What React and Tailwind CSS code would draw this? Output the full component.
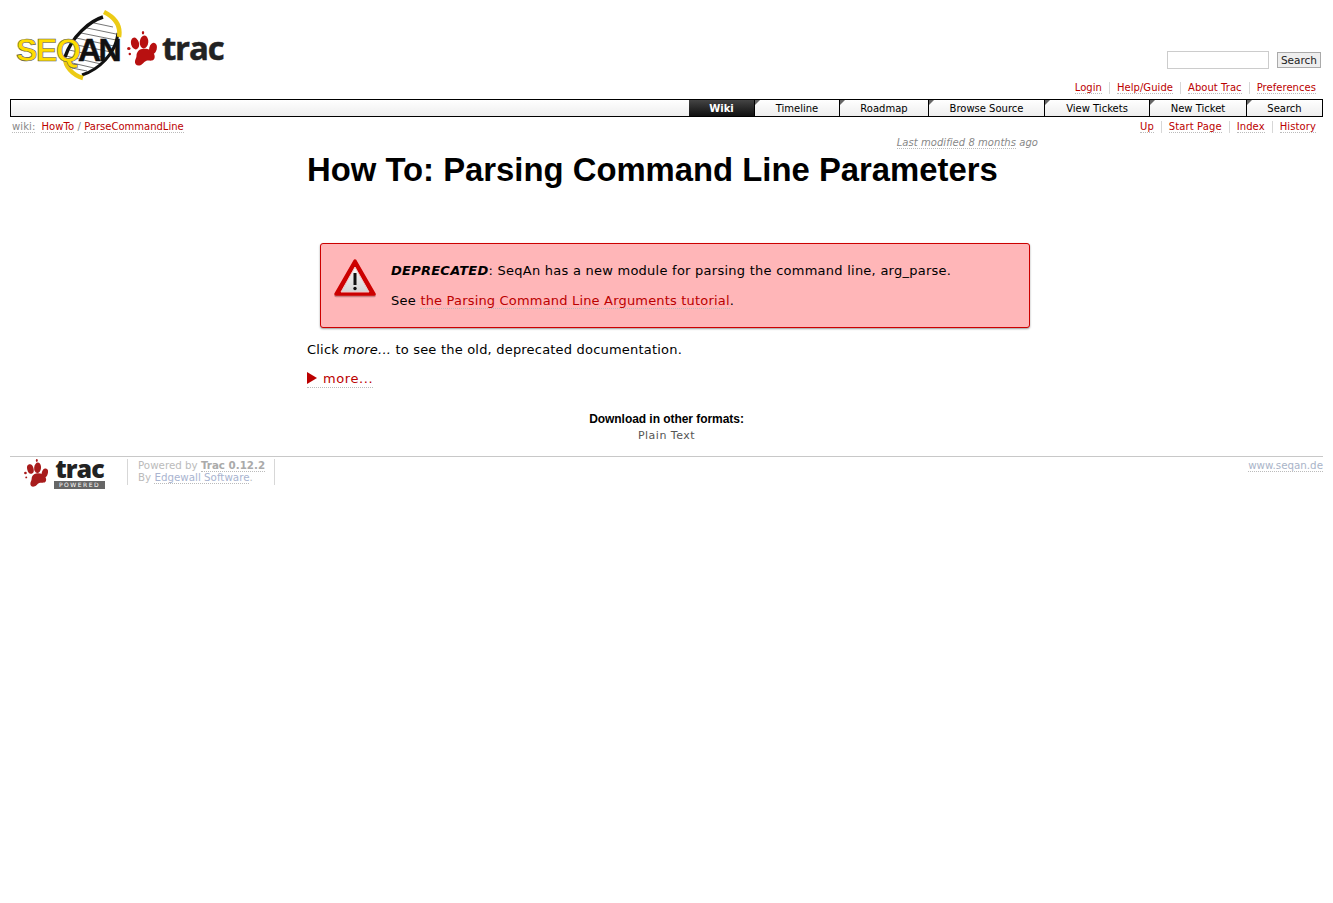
import React from "react";

const verdana = "font-['DejaVu_Sans',Verdana,sans-serif]";
const link = "text-[#b00] border-b border-dotted border-[#bbb]";

// paw drawn in a 30x35 box
const PawShapes = ({ color }) => (
  <g fill={color}>
    <path d="M15 18c5-1 10 1 12 5 1.500 3 .5 6-2 6.500-2.500.5-4-.5-6 .5-2.500 1-3.500 4-6.500 4.500-3 .5-5-1.500-4.500-4.500.3-2 1.500-3 1.500-5 0-3.500 2-6.500 5.500-7z" />
    <ellipse cx="8" cy="12.500" rx="4" ry="6" transform="rotate(-15 8 12.500)" />
    <ellipse cx="17" cy="11" rx="4.300" ry="6.500" transform="rotate(5 17 11)" />
    <ellipse cx="26" cy="17.500" rx="3.800" ry="5.800" transform="rotate(15 26 17.500)" />
    <ellipse cx="1.800" cy="17.500" rx="1.700" ry="1.500" />
    <ellipse cx="16" cy="1.800" rx="1.200" ry="1.800" />
    <ellipse cx="2.800" cy="23" rx="1.200" ry="1.200" />
  </g>
);

const Logo = () => (
  <svg viewBox="0 0 215 72" className="w-[215px] h-[72px] block">
    {/* helix */}
    <path d="M87 7 C74 11 56 26 49 47 C52 56 58 62 66 65 C82 60 98 44 102 23 C100 15 95 9 87 7 Z" fill="#fff" />
    <g stroke="#666" strokeWidth="0.900">
      <path d="M78 13 L97 17" />
      <path d="M71 18 L100 24" />
      <path d="M65 23 L100 30" />
      <path d="M60 28 L98 36" />
      <path d="M56 34 L95 42" />
      <path d="M53 40 L90 48" />
      <path d="M50 46 L85 54" />
      <path d="M52 52 L78 58" />
      <path d="M56 58 L71 61" />
    </g>
    <path d="M87 7 C74 11 56 26 49 47" fill="none" stroke="#111" strokeWidth="3.500" />
    <path d="M102 23 C100 44 82 60 66 65" fill="none" stroke="#111" strokeWidth="3" />
    <path d="M88 2 C100 8 105 16 103 27" fill="none" stroke="#eccb15" strokeWidth="4.500" />
    <path d="M49 48 C49 56 56 65 67 68" fill="none" stroke="#eccb15" strokeWidth="4.500" />
    <text x="0" y="51" fontFamily="'Liberation Sans',sans-serif" fontWeight="700" fontSize="32" letterSpacing="-1.300" fill="#ffdd00" stroke="#555" strokeWidth="0.600">SEQ</text>
    <text x="62" y="51" fontFamily="'Liberation Sans',sans-serif" fontWeight="700" fontSize="32" letterSpacing="-2.500" fill="#111" stroke="#111" strokeWidth="0.500">AN</text>
    <text x="146" y="50" fontFamily="'Open Sans','Liberation Sans',sans-serif" fontWeight="700" fontSize="33" letterSpacing="-1.200" fill="#222" stroke="#222" strokeWidth="0.500">trac</text>
    <g transform="translate(111 21)">
      <PawShapes color="#b81010" />
    </g>
  </svg>
);

const WarningIcon = () => (
  <svg viewBox="0 0 42 42" className="w-[42px] h-[42px] block">
    <defs>
      <linearGradient id="warnFill" x1="0" y1="0" x2="0" y2="1">
        <stop offset="0" stopColor="#fafafa" />
        <stop offset="1" stopColor="#d4d4d4" />
      </linearGradient>
    </defs>
    <path d="M21 4 L40 37.500 L2 37.500 Z" fill="#7a3030" opacity="0.400" stroke="#7a3030" strokeWidth="3.500" strokeLinejoin="round" />
    <path d="M21 3 L40 36 L2 36 Z" fill="#c00" stroke="#c00" strokeWidth="3.500" strokeLinejoin="round" />
    <path d="M21 9 L35 34 L7 34 Z" fill="url(#warnFill)" stroke="#f3c6c6" strokeWidth="1" strokeLinejoin="round" />
    <path d="M21 15 V27" stroke="#111" strokeWidth="3" />
    <circle cx="21" cy="30.500" r="1.700" fill="#111" />
  </svg>
);

const Tab = ({ label, className }) => (
  <div className={`relative h-full flex items-center justify-center border-l border-black bg-gradient-to-b from-white to-[#eee] text-black ${className}`}>
    <span className="absolute top-0 left-0 w-0 h-0 border-t-[5px] border-r-[5px] border-t-[#666] border-r-transparent" />
    {label}
  </div>
);

const MetaLinks = ({ items, className }) => (
  <ul className={`flex justify-end items-start ${className}`}>
    {items.map((item, i) => (
      <li key={item} className={i === 0 ? "pr-[7px]" : "px-[7px] border-l border-[#d7d7d7]"}>
        <a className={link}>{item}</a>
      </li>
    ))}
  </ul>
);

export default function App() {
  return (
    <div className={`min-h-[903px] bg-white text-black px-[10px] ${verdana}`}>
      <div className="h-[80px] flex justify-between">
        <div className="pt-[10px] pl-[6px]">
          <Logo />
        </div>
        <div className="pt-[51px] flex items-start pr-[2px]">
          <div className="w-[102px] h-[18px] border border-[#ccc] bg-white" />
          <div className="ml-2 w-[44px] h-[16px] mt-[1px] border border-[#aaa] bg-[#eee] text-[10.5px] leading-[15px] text-center text-[#222]">Search</div>
        </div>
      </div>

      <MetaLinks items={["Login", "Help/Guide", "About Trac", "Preferences"]} className="text-[10px] leading-[12px] h-[19px] pt-[2px] tracking-[0.05px]" />

      <div className="h-[18px] border border-black flex text-[10px] bg-gradient-to-b from-white to-[#eee]">
        <div className="flex-1" />
        <div className="w-[65px] h-full flex items-center justify-center bg-gradient-to-b from-[#444] to-[#111] text-white font-bold">Wiki</div>
        <Tab label="Timeline" className="w-[85px]" />
        <Tab label="Roadmap" className="w-[89px]" />
        <Tab label="Browse Source" className="w-[116px]" />
        <Tab label="View Tickets" className="w-[105px]" />
        <Tab label="New Ticket" className="w-[97px]" />
        <Tab label="Search" className="w-[76px]" />
      </div>

      <div className="flex justify-between text-[10px] leading-[12px] pt-[4px] h-[19px] tracking-[0.1px]">
        <div className="pl-[2px] whitespace-nowrap">
          <span className="text-[#888] border-b border-dotted border-[#bbb]">wiki:</span>
          <a className={`${link} ml-[6px]`}>HowTo</a>
          <span className="text-[#888]"> / </span>
          <a className={`${link} tracking-[0px]`}>ParseCommandLine</a>
        </div>
        <MetaLinks items={["Up", "Start Page", "Index", "History"]} />
      </div>

      <div className="flex justify-end pr-[285px] text-[10px] leading-[12px] italic text-[#888] h-[12px] mt-[1px] tracking-[0.05px]">
        <span><span className="border-b border-dotted border-[#bbb]">Last modified 8 months</span> ago</span>
      </div>

      <h1 className="pl-[297px] mt-[3px] font-['Liberation_Sans',Arial,sans-serif] font-bold text-[32.85px] leading-[36px] text-black whitespace-nowrap">
        How To: Parsing Command Line Parameters
      </h1>

      <div className="ml-[310px] mt-[55px] w-[710px] h-[85px] bg-[#ffb6b8] border border-[#cc0000] rounded-[3px] shadow-[0_1px_2px_rgba(0,0,0,0.4)] flex items-start text-[13px] tracking-[0.25px]">
        <div className="pl-[13px] pt-[14px] w-[70px] shrink-0">
          <WarningIcon />
        </div>
        <div className="pt-[19px] leading-[16px]">
          <p className="whitespace-nowrap"><b><i>DEPRECATED</i></b>: SeqAn has a new module for parsing the command line, arg_parse.</p>
          <p className="mt-[14px] whitespace-nowrap">See <a className={`${link} tracking-[0.18px]`}>the Parsing Command Line Arguments tutorial</a>.</p>
        </div>
      </div>

      <p className="ml-[297px] mt-[14px] text-[13px] leading-[16px] whitespace-nowrap tracking-[0.2px]">
        Click <i>more...</i> to see the old, deprecated documentation.
      </p>
      <div className="ml-[297px] mt-[13px] text-[13px] leading-[16px] w-fit border-b border-dotted border-[#bbb] flex items-center text-[#b00] tracking-[0.6px]">
        <span className="w-0 h-0 -mt-[2px] border-y-[6px] border-y-transparent border-l-[10px] border-l-[#b00] mr-[6px]" />
        more...
      </div>

      <div className="mt-[23px] text-center">
        <div className="font-['Liberation_Sans',Arial,sans-serif] font-bold text-[12px] leading-[16px] tracking-[-0.05px]">Download in other formats:</div>
        <div className="mt-[1px] text-[11px] leading-[16px] text-[#555] tracking-[0.5px]">Plain Text</div>
      </div>

      <div className="mt-[12px] border-t border-[#c8c8c8] flex justify-between pt-[2px] text-[10.3px] leading-[12px] text-[#bbb]">
        <div className="flex items-start">
          <div className="w-[118px] h-[26px] pl-[14px] flex items-start border-r border-[#d7d7d7]">
            <svg viewBox="0 0 30 35" className="w-[24px] h-[28px] block shrink-0">
              <PawShapes color="#a81c1c" />
            </svg>
            <div className="ml-[6px] -mt-[1px] flex flex-col items-center">
              <span className="font-['Open_Sans',sans-serif] font-extrabold text-[25px] leading-[20px] tracking-[-1px] text-[#222]">trac</span>
              <span className="mt-[3px] w-[51px] h-[8px] bg-[#666] text-white text-[6px] leading-[8px] text-center tracking-[1.500px]">POWERED</span>
            </div>
          </div>
          <div className="px-[10px] w-[147px] h-[26px] border-r border-[#d7d7d7] whitespace-nowrap">
            <div>Powered by <a className="font-bold text-[#aaa] border-b border-dotted border-[#bbb]">Trac 0.12.2</a></div>
            <div>By <a className="text-[#a9b4d0] border-b border-dotted border-[#bbb]">Edgewall Software</a>.</div>
          </div>
        </div>
        <a className="h-fit text-[#a9b4c8] border-b border-dotted border-[#bbb]">www.seqan.de</a>
      </div>
    </div>
  );
}
